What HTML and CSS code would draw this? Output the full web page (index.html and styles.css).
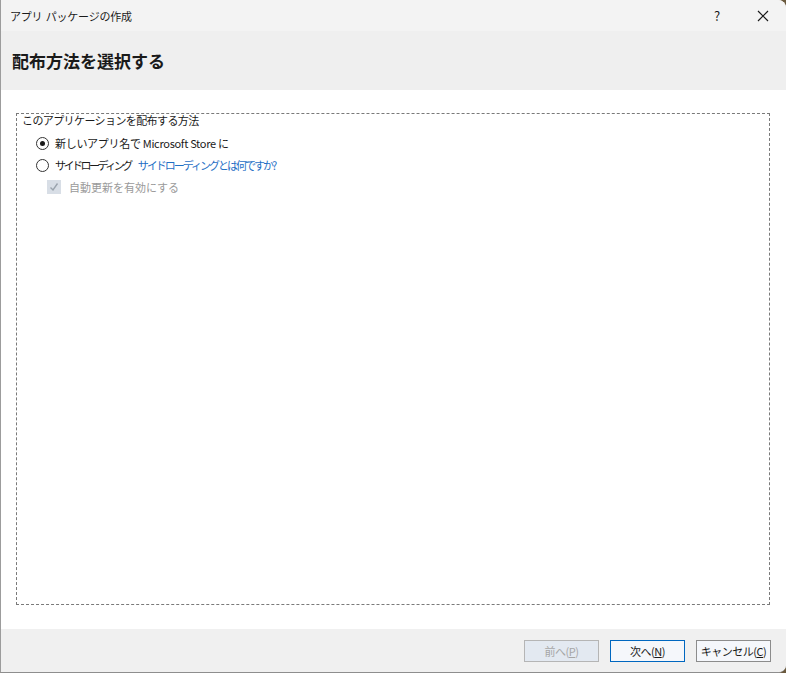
FILE: index.html
```html
<!DOCTYPE html>
<html lang="ja">
<head>
    <meta charset="UTF-8">
    <title>アプリ パッケージの作成</title>
    <link rel="stylesheet" href="styles.css">
</head>
<body>
    <div class="window">
        <div class="titlebar">
            <span class="title">アプリ パッケージの作成</span>
            <span class="help">?</span>
            <span class="close">
                <svg width="12" height="12" viewBox="0 0 12 12"><path d="M1 1 L11 11 M11 1 L1 11" stroke="#1a1a1a" stroke-width="1.2" fill="none"/></svg>
            </span>
        </div>

        <div class="header">
            <h1>配布方法を選択する</h1>
        </div>

        <div class="content">
            <div class="group">
                <div class="group-label">このアプリケーションを配布する方法</div>
                <div class="option">
                    <span class="radio checked"></span>
                    <span>新しいアプリ名で Microsoft Store に</span>
                </div>
                <div class="option">
                    <span class="radio"></span>
                    <span class="kana">サイドローディング</span>
                    <a class="link">サイドローディングとは何ですか?</a>
                </div>
                <div class="option sub disabled">
                    <span class="check">
                        <svg width="10" height="10" viewBox="0 0 10 10"><path d="M1.5 5.5 L4 8 L8.5 1.5" stroke="#9aa3ad" stroke-width="1.4" fill="none"/></svg>
                    </span>
                    <span>自動更新を有効にする</span>
                </div>
            </div>
        </div>

        <div class="footer">
            <button class="btn" disabled>前へ(<u>P</u>)</button>
            <button class="btn primary">次へ(<u>N</u>)</button>
            <button class="btn">キャンセル(<u>C</u>)</button>
        </div>
    </div>
</body>
</html>
```

FILE: styles.css
```css
body {
    margin: 0;
    background-color: #6b5a3e;
    font-family: "Noto Sans CJK JP", "Noto Sans", sans-serif;
    font-size: 11px;
    letter-spacing: -0.3px;
    color: #1a1a1a;
    overflow: hidden;
}

.window {
    width: 785px;
    height: 672px;
    display: flex;
    flex-direction: column;
    background-color: #fff;
    border-left: 1px solid #9c9c9c;
    border-bottom: 1px solid #8e8e8e;
    border-top-right-radius: 8px;
    border-bottom-right-radius: 8px;
    overflow: hidden;
}

.titlebar {
    height: 31px;
    display: flex;
    align-items: center;
    background-color: #f3f3f3;
    padding-left: 9px;
}

.title {
    flex: 1;
    font-size: 11px;
    letter-spacing: -0.2px;
    word-spacing: 1px;
}

.help {
    width: 46px;
    text-align: center;
    font-size: 13px;
}

.close {
    width: 46px;
    display: flex;
    justify-content: center;
    align-items: center;
}

.header {
    height: 59px;
    display: flex;
    align-items: center;
    background-color: #efefef;
    padding-left: 11px;
}

h1 {
    margin: 0;
    font-size: 17px;
    font-weight: bold;
    letter-spacing: 0;
    color: #1a1a1a;
}

.content {
    flex: 1;
    padding: 23px 16px 24px 15px;
}

.group {
    height: 100%;
    box-sizing: border-box;
    border: 1px dashed #7a7a7a;
    padding: 0 5px;
}

.group-label {
    line-height: 12px;
    margin-bottom: 6px;
    letter-spacing: -0.6px;
}

.option {
    display: flex;
    align-items: center;
    gap: 6px;
    height: 22px;
    padding-left: 14px;
}

.radio {
    width: 11px;
    height: 11px;
    border: 1px solid #333;
    border-radius: 50%;
    position: relative;
    background-color: #fff;
}

.radio.checked::after {
    content: "";
    position: absolute;
    left: 3px;
    top: 3px;
    width: 5px;
    height: 5px;
    border-radius: 50%;
    background-color: #1a1a1a;
}

.kana {
    letter-spacing: -2.5px;
}

.link {
    color: #1f6fc5;
    margin-left: 1px;
    letter-spacing: -2px;
}

.option.sub {
    padding-left: 25px;
    gap: 8px;
}

.check {
    width: 14px;
    height: 14px;
    background-color: #d8dee6;
    display: flex;
    justify-content: center;
    align-items: center;
}

.disabled {
    color: #9a9a9a;
    letter-spacing: 0;
}

.footer {
    height: 43px;
    display: flex;
    justify-content: flex-end;
    align-items: center;
    gap: 11px;
    background-color: #f0f0f0;
    padding-right: 15px;
}

.btn {
    width: 75px;
    height: 22px;
    font-family: "Noto Sans CJK JP", "Noto Sans", sans-serif;
    font-size: 11px;
    letter-spacing: -0.5px;
    white-space: nowrap;
    color: #1a1a1a;
    background-color: #f5f7fb;
    border: 1px solid #8c8c8c;
    padding: 0;
}

.btn.primary {
    border-color: #0067c0;
}

.btn:disabled {
    background-color: #e3e9f1;
    border-color: #b5b5b5;
    color: #a6a6a6;
}
```
